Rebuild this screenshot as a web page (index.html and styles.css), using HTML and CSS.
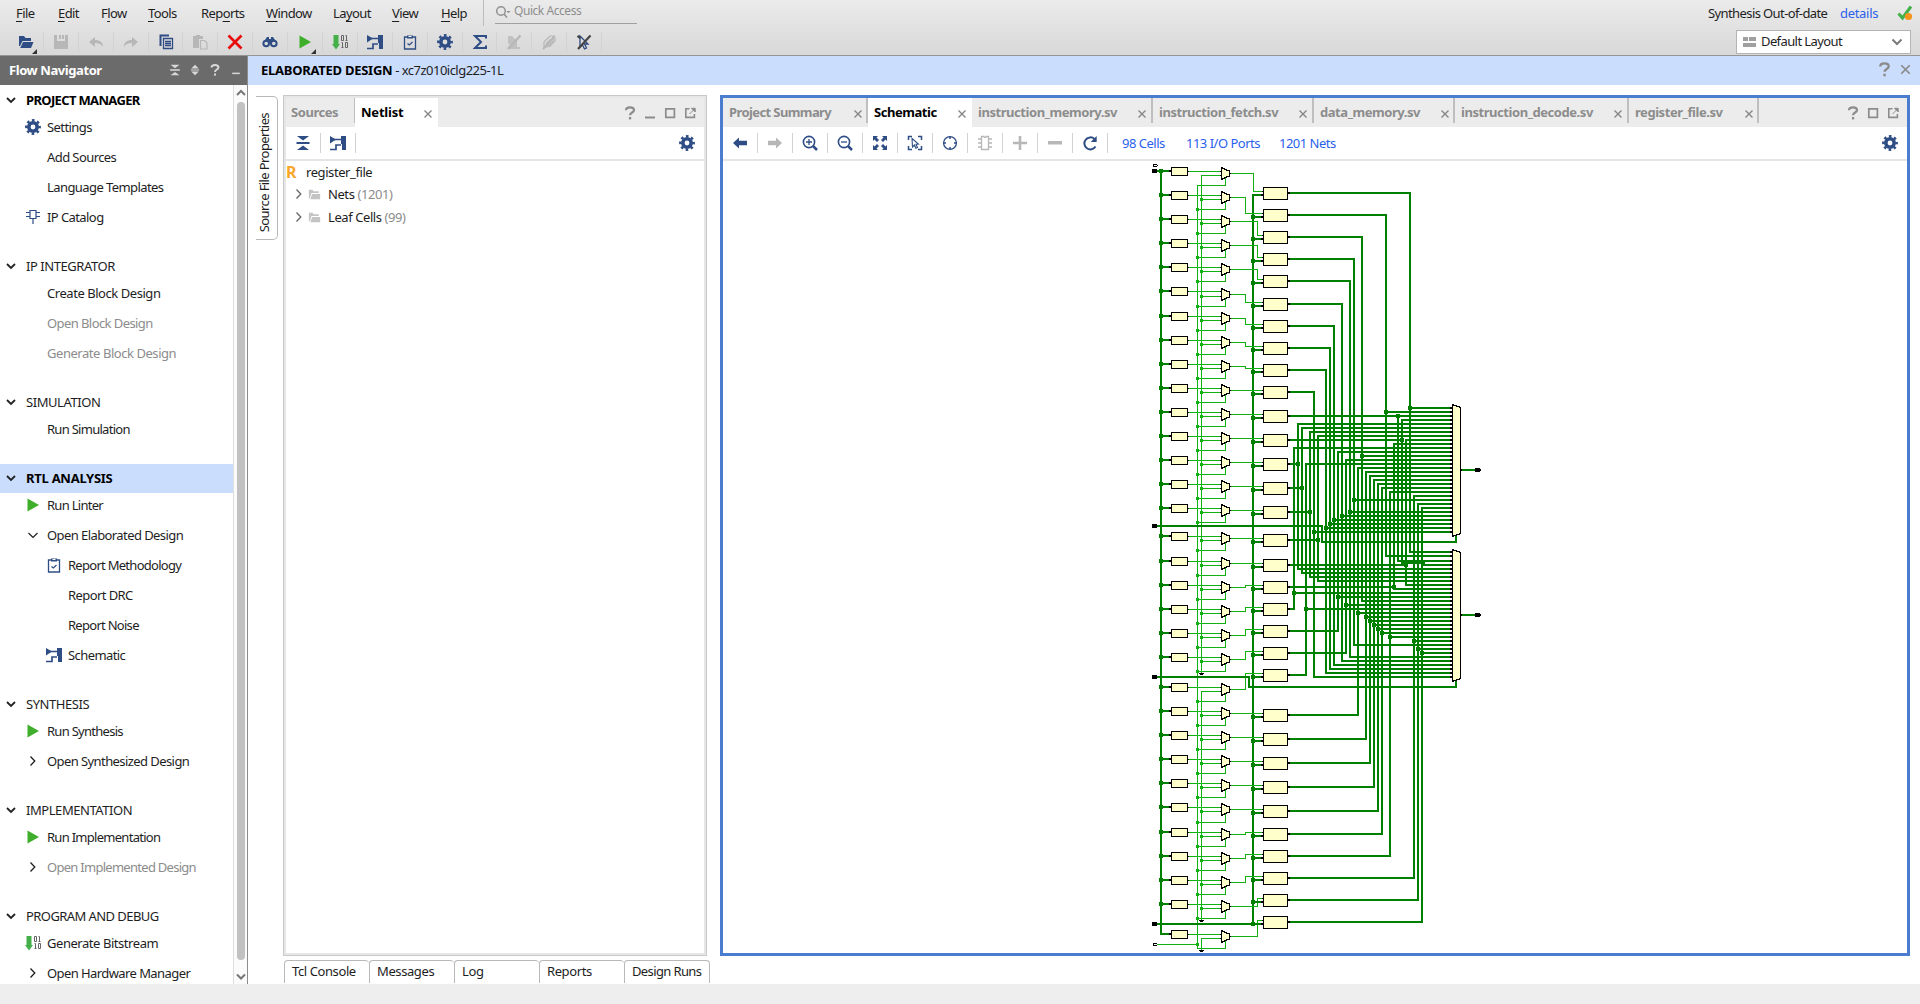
FILE: index.html
```html
<!DOCTYPE html>
<html lang="en">
<head>
<meta charset="utf-8">
<title>Elaborated Design</title>
<link rel="stylesheet" href="styles.css">
</head>
<body>
<svg class="defs" aria-hidden="true">
  <symbol id="gear" viewBox="0 0 16 16"><circle cx="8" cy="8" r="4.2" fill="none" stroke="currentColor" stroke-width="3.6"/><circle cx="8" cy="8" r="6.7" fill="none" stroke="currentColor" stroke-width="2.4" stroke-dasharray="2.631 2.631" stroke-dashoffset="1.315"/></symbol>
  <symbol id="open" viewBox="0 0 16 16"><path d="M1 12V2h5l1.500 2H13v3H4.500L2 12z" fill="currentColor"/><path d="M5 8h10.500l-2.500 6H2.200z" fill="currentColor"/></symbol>
  <symbol id="save" viewBox="0 0 16 16"><path d="M1 1h3v6h8V1h3v14H1zM6 1h2v4H6zM9 1h2v4H9z" fill="currentColor"/></symbol>
  <symbol id="undo" viewBox="0 0 16 16"><path d="M1 8l6-5v3c5 0 8 2 8 7-2-3-4-4-8-4v4z" fill="currentColor"/></symbol>
  <symbol id="redo" viewBox="0 0 16 16"><path d="M15 8L9 3v3c-5 0-8 2-8 7 2-3 4-4 8-4v4z" fill="currentColor"/></symbol>
  <symbol id="copy" viewBox="0 0 16 16"><path d="M2.500 12V1.500H11" fill="none" stroke="currentColor" stroke-width="2"/><path d="M5.500 4.500h9v10h-9zM7 7.500h6M7 9.500h6M7 11.500h6" fill="none" stroke="currentColor" stroke-width="1.300"/></symbol>
  <symbol id="paste" viewBox="0 0 16 16"><path d="M1 2h3V1h4v1h3v3H7v9H1z" fill="currentColor"/><path d="M8.500 6.500h4l2.500 2.500v6H8.500z" fill="none" stroke="currentColor" stroke-width="1.200"/></symbol>
  <symbol id="cross" viewBox="0 0 16 16"><path d="M1.500 1.500l13 13M14.500 1.500l-13 13" stroke="currentColor" stroke-width="2.700"/></symbol>
  <symbol id="find" viewBox="0 0 16 16"><path d="M3 6l2-3h2v2h2V3h2l2 3z" fill="currentColor"/><circle cx="4.200" cy="9.500" r="2.800" fill="none" stroke="currentColor" stroke-width="2"/><circle cx="11.800" cy="9.500" r="2.800" fill="none" stroke="currentColor" stroke-width="2"/><path d="M6 6h4v3H6z" fill="currentColor"/></symbol>
  <symbol id="play" viewBox="0 0 16 16"><path d="M2.500 1.500L14 8 2.500 14.500z" fill="#3fae2a"/></symbol>
  <symbol id="bits" viewBox="0 0 16 16"><path d="M1.500 1h5v9H8l-4 5.500L0 10h1.500z" fill="#45b04a"/><path d="M9.500 1.500h2v5h-2zM13.500 6.500h2M14.500 6.500v-5h-1M9.500 13.500h2M10.500 13.500v-5h-1M13.500 8.500h2v5h-2z" fill="none" stroke="#666"/></symbol>
  <symbol id="schem" viewBox="0 0 16 16"><path d="M0 1l6 3.500L0 8.500z" fill="currentColor"/><path d="M4 4.500h8M0 14.500h6v-4.500h5" fill="none" stroke="currentColor" stroke-width="1.700"/><path d="M11 1h5v14h-4V9h-1z" fill="currentColor"/></symbol>
  <symbol id="clip" viewBox="0 0 16 16"><path d="M2.500 3h11v12h-11z" fill="none" stroke="currentColor" stroke-width="1.300"/><path d="M5 4.500v-3h6v3z" fill="currentColor"/><path d="M6.500 2h3v1h-3z" fill="#fff"/><path d="M5.500 9.500l1.800 1.500 3.200-3" fill="none" stroke="currentColor" stroke-width="1.200"/></symbol>
  <symbol id="sum" viewBox="0 0 16 16"><path d="M14 4.500V2H3l6 6-6 6h11v-2.500" fill="none" stroke="currentColor" stroke-width="2"/></symbol>
  <symbol id="off1" viewBox="0 0 16 16"><path d="M2 2h4l5 5v6H6L2 9zM3 13h11v2H3z" fill="currentColor" opacity=".75"/><path d="M2 15L14.500 1.500" stroke="currentColor" stroke-width="2.400"/></symbol>
  <symbol id="off2" viewBox="0 0 16 16"><path d="M3 12V8l6-6h3v5l-6 6zM5 10l5-5M8 13l6-6V4" fill="none" stroke="currentColor" stroke-width="1.200"/><path d="M2 15L14 2" stroke="currentColor" stroke-width="2"/></symbol>
  <symbol id="nosel" viewBox="0 0 16 16"><path d="M4 2l8 8H8.500l2 4-2 1-2-4L4 13z" fill="none" stroke="#2c4a80" stroke-width="1.300"/><path d="M2 15L14.500 1.500M1.500 2l3 2" stroke="#444" stroke-width="2.200"/></symbol>
  <symbol id="collapse" viewBox="0 0 16 16"><path d="M2 1h12L8 5.500zM2 15h12l-6-4.500zM1.500 7h13v2h-13z" fill="currentColor"/></symbol>
  <symbol id="expand" viewBox="0 0 16 16"><path d="M3 6h10L8 1zM3 10h10l-5 5zM2.500 7.200h11v1.600h-11z" fill="currentColor"/></symbol>
  <symbol id="help" viewBox="0 0 16 16"><path d="M4 5.200C4 3 5.500 2.300 8 2.300s4 .9 4 2.900c0 2.300-4 2.300-4 5" fill="none" stroke="currentColor" stroke-width="2.200"/><path d="M6.900 12h2.300v2.400H6.900z" fill="currentColor"/></symbol>
  <symbol id="min" viewBox="0 0 16 16"><path d="M3 11.500h10v2H3z" fill="currentColor"/></symbol>
  <symbol id="max" viewBox="0 0 16 16"><path d="M3.800 3.800h8.600v8.600H3.800z" fill="none" stroke="currentColor" stroke-width="1.700"/></symbol>
  <symbol id="pop" viewBox="0 0 16 16"><path d="M7.500 3.800H3.800v8.600h8.600V9" fill="none" stroke="currentColor" stroke-width="1.600"/><path d="M7.500 9l4-4M9.500 3.300h3.700V7z" fill="currentColor" stroke="currentColor" stroke-width="1"/></symbol>
  <symbol id="x" viewBox="0 0 16 16"><path d="M4 4l8 8M12 4l-8 8" stroke="currentColor" stroke-width="1.600"/></symbol>
  <symbol id="down" viewBox="0 0 16 16"><path d="M4 6l4 4 4-4" fill="none" stroke="currentColor" stroke-width="1.800"/></symbol>
  <symbol id="thindown" viewBox="0 0 16 16"><path d="M3.500 6L8 10.500 12.500 6" fill="none" stroke="currentColor" stroke-width="1.200"/></symbol>
  <symbol id="right" viewBox="0 0 16 16"><path d="M5.500 3.500L9.800 8 5.500 12.500" fill="none" stroke="currentColor" stroke-width="1.300"/></symbol>
  <symbol id="ip" viewBox="0 0 16 16"><path d="M5 1.500h6v8H5zM1 3.500h4M1 7.500h4M11 3.500h4M11 7.500h4M8 9.500V15" fill="none" stroke="currentColor" stroke-width="1.200"/></symbol>
  <symbol id="folder" viewBox="0 0 16 16"><path d="M2 12V3h4l1 1.500h5.500v2H4.800L3 12z" fill="currentColor"/><path d="M5.500 7.500H14V13H3.500z" fill="currentColor"/></symbol>
  <symbol id="back" viewBox="0 0 16 16"><path d="M1 8l6-5.500v3.200h8v4.600H7v3.200z" fill="currentColor"/></symbol>
  <symbol id="fwd" viewBox="0 0 16 16"><path d="M15 8L9 2.500v3.200H1v4.600h8v3.200z" fill="currentColor"/></symbol>
  <symbol id="zin" viewBox="0 0 16 16"><circle cx="7" cy="7" r="5.600" fill="none" stroke="currentColor" stroke-width="1.600"/><path d="M4 7h6M7 4v6" stroke="currentColor" stroke-width="1.300"/><path d="M11 11l4 4" stroke="currentColor" stroke-width="2.500"/></symbol>
  <symbol id="zout" viewBox="0 0 16 16"><circle cx="7" cy="7" r="5.600" fill="none" stroke="currentColor" stroke-width="1.600"/><path d="M4 7h6" stroke="currentColor" stroke-width="1.300"/><path d="M11 11l4 4" stroke="currentColor" stroke-width="2.500"/></symbol>
  <symbol id="fit" viewBox="0 0 16 16"><path d="M1 1h5L4.500 2.500 7 5 5 7 2.500 4.500 1 6zM15 1v5l-1.500-1.500L11 7 9 5l2.500-2.500L10 1zM1 15v-5l1.500 1.500L5 9l2 2-2.500 2.500L6 15zM15 15h-5l1.500-1.500L9 11l2-2 2.500 2.500L15 10z" fill="currentColor"/></symbol>
  <symbol id="fitsel" viewBox="0 0 16 16"><path d="M1.500 5V1.500H5M11 1.500h3.500V5M14.500 11v3.500H11M5 14.500H1.500V11" fill="none" stroke="currentColor" stroke-width="1.500"/><path d="M5 3.500l6.500 5.500-2.500.3 1.500 3.200-1.600.8-1.400-3.300L5.500 12z" fill="none" stroke="currentColor" stroke-width="1.100"/></symbol>
  <symbol id="target" viewBox="0 0 16 16"><circle cx="8" cy="8" r="6.400" fill="none" stroke="currentColor" stroke-width="1.300"/><path d="M8 1v3M8 12v3M1 8h3M12 8h3" stroke="currentColor" stroke-width="1.500"/></symbol>
  <symbol id="chip" viewBox="0 0 16 16"><path d="M4.500 1.500H7c0 1.500 2 1.500 2 0h2.500v13h-7zM1 4h3.500M1 8h3.500M1 12h3.500M11.500 4H15M11.500 8H15M11.500 12H15" fill="none" stroke="currentColor" stroke-width="1.300"/></symbol>
  <symbol id="plus" viewBox="0 0 16 16"><path d="M1 6.700h5.700V1h2.600v5.700H15v2.600H9.300V15H6.700V9.300H1z" fill="currentColor"/></symbol>
  <symbol id="minus" viewBox="0 0 16 16"><path d="M1 6h14v3.500H1z" fill="currentColor"/></symbol>
  <symbol id="reload" viewBox="0 0 16 16"><path d="M13.500 11.500A6 6 0 1 1 12.500 4" fill="none" stroke="currentColor" stroke-width="2"/><path d="M14.700 1v6h-6z" fill="currentColor"/></symbol>
</svg>

<header class="top">
  <div class="menurow">
    <nav class="menus">
      <span class="m-file"><u>F</u>ile</span><span class="m-edit"><u>E</u>dit</span><span class="m-flow">F<u>l</u>ow</span><span class="m-tools"><u>T</u>ools</span><span class="m-reports">Rep<u>o</u>rts</span><span class="m-window"><u>W</u>indow</span><span class="m-layout">La<u>y</u>out</span><span class="m-view"><u>V</u>iew</span><span class="m-help"><u>H</u>elp</span>
    </nav>
    <div class="quick"><svg class="qicon" viewBox="0 0 16 16"><circle cx="5.500" cy="7" r="4.300"/><path d="M8.500 10l3 3.500"/><path d="M11 7h4l-2 2.200z" class="solid"/></svg><span>Quick Access</span></div>
    <div class="status"><span class="st-text">Synthesis Out-of-date</span><a>details</a><svg class="okicon" viewBox="0 0 16 16"><path d="M1.500 8.500l4 4.500L14 1.500" fill="none" stroke="#45b04a" stroke-width="3"/><circle cx="11.500" cy="11.500" r="3.600" fill="#f7941d"/></svg></div>
  </div>
  <div class="toolrow">
    <div class="tools">
      <i class="tb navy drop"><svg><use href="#open"/></svg></i><i class="tb off"><svg><use href="#save"/></svg></i><i class="tb off"><svg><use href="#undo"/></svg></i><i class="tb off"><svg><use href="#redo"/></svg></i><i class="tb navy"><svg><use href="#copy"/></svg></i><i class="tb off"><svg><use href="#paste"/></svg></i><i class="tb red"><svg><use href="#cross"/></svg></i><i class="tb navy"><svg><use href="#find"/></svg></i><i class="tb drop"><svg><use href="#play"/></svg></i><i class="tb"><svg><use href="#bits"/></svg></i><i class="tb navy"><svg><use href="#schem"/></svg></i><i class="tb navy"><svg><use href="#clip"/></svg></i><i class="tb navy"><svg><use href="#gear"/></svg></i><i class="tb navy"><svg><use href="#sum"/></svg></i><i class="tb off"><svg><use href="#off1"/></svg></i><i class="tb off"><svg><use href="#off2"/></svg></i><i class="tb"><svg><use href="#nosel"/></svg></i>
    </div>
    <div class="layoutsel"><svg class="lay" viewBox="0 0 13 12"><path d="M0 1h5v4H0zM6 1h7v4H6zM0 7h13v4H0z"/></svg><span>Default Layout</span><svg class="chev" viewBox="0 0 16 16"><path d="M3.500 5.500L8 10l4.500-4.500"/></svg></div>
  </div>
</header>

<main class="main">
  <aside class="side">
    <div class="sidehead"><b>Flow Navigator</b><svg><use href="#collapse"/></svg><svg><use href="#expand"/></svg><svg class="big"><use href="#help"/></svg><svg><use href="#min"/></svg></div>
    <div class="sidebody">
      <div class="flow">
        <section><h3 class="b tight"><svg><use href="#down"/></svg>PROJECT MANAGER</h3>
          <ul><li class="navy"><svg><use href="#gear"/></svg>Settings</li><li><svg></svg>Add Sources</li><li><svg></svg>Language Templates</li><li class="navy"><svg><use href="#ip"/></svg>IP Catalog</li></ul></section>
        <section><h3><svg><use href="#down"/></svg>IP INTEGRATOR</h3>
          <ul><li class="loose"><svg></svg>Create Block Design</li><li class="dis"><svg></svg>Open Block Design</li><li class="dis loose"><svg></svg>Generate Block Design</li></ul></section>
        <section><h3><svg><use href="#down"/></svg>SIMULATION</h3>
          <ul><li class="tight"><svg></svg>Run Simulation</li></ul></section>
        <section><h3 class="b sel"><svg><use href="#down"/></svg>RTL ANALYSIS</h3>
          <ul><li class="tight"><svg><use href="#play"/></svg>Run Linter</li><li><svg><use href="#thindown"/></svg>Open Elaborated Design</li><li class="sub navy tight"><svg><use href="#clip"/></svg>Report Methodology</li><li class="sub"><svg></svg>Report DRC</li><li class="sub tight"><svg></svg>Report Noise</li><li class="sub navy"><svg><use href="#schem"/></svg>Schematic</li></ul></section>
        <section><h3><svg><use href="#down"/></svg>SYNTHESIS</h3>
          <ul><li class="tight"><svg><use href="#play"/></svg>Run Synthesis</li><li><svg><use href="#right"/></svg>Open Synthesized Design</li></ul></section>
        <section><h3><svg><use href="#down"/></svg>IMPLEMENTATION</h3>
          <ul><li class="tight"><svg><use href="#play"/></svg>Run Implementation</li><li class="dis tight"><svg><use href="#right"/></svg>Open Implemented Design</li></ul></section>
        <section><h3 class="mid"><svg><use href="#down"/></svg>PROGRAM AND DEBUG</h3>
          <ul><li class="loose"><svg><use href="#bits"/></svg>Generate Bitstream</li><li><svg><use href="#right"/></svg>Open Hardware Manager</li></ul></section>
      </div>
      <div class="scroll"><svg viewBox="0 0 14 14"><path d="M3 9.500l4-4 4 4"/></svg><div class="thumb"></div><svg viewBox="0 0 14 14"><path d="M3 5l4 4 4-4"/></svg></div>
    </div>
  </aside>

  <div class="work">
    <div class="title"><span><b>ELABORATED DESIGN</b> - xc7z010iclg225-1L</span><svg><use href="#help"/></svg><svg><use href="#x"/></svg></div>
    <div class="panes">
      <div class="vtab"><span>Source File Properties</span></div>
      <div class="leftcol">
        <div class="panel netlist">
          <div class="tabs"><span class="tab t-src">Sources</span><span class="tab on t-net">Netlist<svg><use href="#x"/></svg></span><span class="ctl"><svg><use href="#help"/></svg><svg><use href="#min"/></svg><svg><use href="#max"/></svg><svg><use href="#pop"/></svg></span></div>
          <div class="bar"><i class="pb"><svg><use href="#collapse"/></svg></i><i class="pb"><svg><use href="#schem"/></svg></i><svg class="gearend"><use href="#gear"/></svg></div>
          <div class="tree">
            <div class="root"><b>R</b>register_file</div>
            <div class="node"><svg class="arr"><use href="#right"/></svg><svg class="fold"><use href="#folder"/></svg>Nets&nbsp;<em>(1201)</em></div>
            <div class="node"><svg class="arr"><use href="#right"/></svg><svg class="fold"><use href="#folder"/></svg>Leaf Cells&nbsp;<em>(99)</em></div>
          </div>
        </div>
        <div class="btabs"><span>Tcl Console</span><span>Messages</span><span>Log</span><span>Reports</span><span>Design Runs</span></div>
      </div>
      <div class="panel sch">
        <div class="tabs"><span class="tab w1">Project Summary<svg><use href="#x"/></svg></span><span class="tab on w2">Schematic<svg><use href="#x"/></svg></span><span class="tab w3">instruction_memory.sv<svg><use href="#x"/></svg></span><span class="tab w4">instruction_fetch.sv<svg><use href="#x"/></svg></span><span class="tab w5">data_memory.sv<svg><use href="#x"/></svg></span><span class="tab w6">instruction_decode.sv<svg><use href="#x"/></svg></span><span class="tab w7">register_file.sv<svg><use href="#x"/></svg></span><span class="ctl"><svg><use href="#help"/></svg><svg><use href="#max"/></svg><svg><use href="#pop"/></svg></span></div>
        <div class="bar"><i class="pb"><svg><use href="#back"/></svg></i><i class="pb off"><svg><use href="#fwd"/></svg></i><i class="pb"><svg><use href="#zin"/></svg></i><i class="pb"><svg><use href="#zout"/></svg></i><i class="pb"><svg><use href="#fit"/></svg></i><i class="pb"><svg><use href="#fitsel"/></svg></i><i class="pb"><svg><use href="#target"/></svg></i><i class="pb off"><svg><use href="#chip"/></svg></i><i class="pb off"><svg><use href="#plus"/></svg></i><i class="pb off"><svg><use href="#minus"/></svg></i><i class="pb"><svg><use href="#reload"/></svg></i><a class="l1">98 Cells</a><a class="l2">113 I/O Ports</a><a>1201 Nets</a><svg class="gearend"><use href="#gear"/></svg></div>
        <svg id="canvas" viewBox="723 161 1184 792" shape-rendering="crispEdges"></svg>
      </div>
    </div>
  </div>
</main>
<footer class="foot"></footer>
<script src="schematic.js"></script>
</body>
</html>
```

FILE: styles.css
```css
* { box-sizing: border-box; }
body { margin: 0; width: 1920px; height: 1004px; overflow: hidden; display: flex; flex-direction: column; background: #fff; color: #1e1e1e; font: 13px/16px "Noto Sans", sans-serif; letter-spacing: -0.6px; }
svg { width: 16px; height: 16px; flex: none; display: block; }
.defs { width: 0; height: 0; position: absolute; }
i { font-style: normal; }
h3, ul { margin: 0; padding: 0; list-style: none; font-size: 13px; font-weight: 400; }
u { text-underline-offset: 3px; }
.navy svg { color: #2f4d85; }
.off svg { color: #b7b7b7; }
.red svg { color: #e80c0c; }

.top { height: 56px; flex: none; border-bottom: 1px solid #959595; background: linear-gradient(#ebebeb, #d8d8d8); }
.menurow { height: 27px; display: flex; align-items: center; }
.menus { display: flex; width: 484px; height: 26px; align-items: center; padding-left: 16px; border-right: 1px solid #bdbdbd; align-self: flex-start; }
.menus span { flex: none; }
.m-file { width: 42px; } .m-edit { width: 43px; } .m-flow { width: 47px; } .m-tools { width: 53px; } .m-reports { width: 65px; } .m-window { width: 67px; } .m-layout { width: 59px; } .m-view { width: 49px; }
.quick { width: 142px; height: 24px; margin-left: 11px; display: flex; align-items: center; align-self: flex-start; border-bottom: 1px solid #a0a0a0; color: #8e8e8e; font-size: 12px; letter-spacing: -.45px; }
.quick span { padding-bottom: 1px; }
.qicon { width: 17px; margin-right: 2px; fill: none; stroke: #909090; stroke-width: 1.5; }
.qicon .solid { fill: #909090; stroke: none; }
.status { margin-left: auto; display: flex; align-items: center; height: 25px; align-self: flex-start; padding-right: 7px; }
.st-text { width: 132px; }
.status a { width: 57px; letter-spacing: -.3px; }
a { color: #2b5fec; }
.toolrow { height: 28px; display: flex; align-items: center; justify-content: space-between; padding: 2px 9px 0; }
.tools { display: flex; }
.tb { width: 34.9px; height: 20px; display: flex; align-items: center; justify-content: center; border-right: 1px solid #d2d2d2; position: relative; }
.drop::after { content: ""; position: absolute; right: 6px; bottom: -2px; border-left: 5px solid transparent; border-bottom: 5px solid #333; }
.layoutsel { width: 175px; height: 24px; margin-top: -1px; background: #fff; border: 1px solid #b4b4b4; display: flex; align-items: center; padding: 0 5px 0 6px; }
.lay { width: 13px; height: 12px; margin-right: 5px; fill: #a0a0a0; }
.layoutsel span { padding-bottom: 1px; }
.chev { margin-left: auto; fill: none; stroke: #7a7a7a; stroke-width: 2; }

.main { height: 928px; flex: none; display: flex; }
.side { width: 248px; display: flex; flex-direction: column; border-right: 1px solid #8c8c8c; }
.sidehead { height: 29px; flex: none; background: #6b6b6b; color: #fff; display: flex; align-items: center; padding: 0 5px 2px 9px; }
.sidehead b { margin-right: auto; letter-spacing: -.42px; }
.sidehead svg { width: 12px; height: 12px; margin-left: 8px; color: #d8d8d8; }
.sidehead .big { width: 14px; height: 14px; margin: 0 0 0 7px; }
.sidebody { display: flex; flex: 1; min-height: 0; overflow: hidden; }
.flow { width: 233px; padding-top: 1px; overflow: hidden; }
.flow h3 { height: 29px; display: flex; align-items: center; padding: 0 0 2px 3px; letter-spacing: -.44px; }
.flow h3 svg { margin-right: 7px; color: #222; }
.flow h3.b { font-weight: 700; color: #000; }
.flow h3.sel { background: #cbddfd; letter-spacing: -.26px; }
.flow h3.tight { letter-spacing: -.65px; }
.flow h3.mid { letter-spacing: -.57px; }
.flow ul { margin: -3px 0 20px; }
.flow li { height: 30px; display: flex; align-items: center; padding-left: 25px; white-space: nowrap; letter-spacing: -.58px; }
.flow li.tight { letter-spacing: -.72px; }
.flow li.loose { letter-spacing: -.45px; }
.flow li svg { margin-right: 6px; }
.flow .sub { padding-left: 46px; }
.dis { color: #8c8c8c; }
.dis svg { color: #222; }
.scroll { width: 14px; border-left: 1px solid #dedede; background: #fbfbfb; display: flex; flex-direction: column; align-items: center; padding: 0; }
.scroll svg { width: 14px; height: 15px; fill: none; stroke: #777; stroke-width: 2; }
.thumb { width: 8px; height: 858px; margin: 2px 0 9px; border-radius: 4px; background: #c1c1c1; }

.work { flex: 1; display: flex; flex-direction: column; }
.title { height: 29px; background: #cbddfd; display: flex; align-items: center; padding: 0 6px 2px 13px; color: #1e1e1e; letter-spacing: -.52px; }
.title b { color: #000; letter-spacing: -.26px; }
.title span { margin-right: auto; }
.title svg { color: #8a8a8a; margin-left: 4px; width: 17px; height: 17px; }
.panes { flex: 1; display: flex; align-items: flex-start; padding: 10px 0 0 8px; }
.vtab { width: 22px; height: 144px; margin: 1px 5px 0 0; border: 1px solid #b8b8b8; border-left: 0; border-radius: 0 5px 5px 0; display: flex; align-items: center; justify-content: center; }
.vtab span { writing-mode: vertical-rl; transform: rotate(180deg); padding: 0 0 10px 3px; margin-right: 2px; }
.leftcol { width: 427px; margin-right: 10px; }
.panel { display: flex; flex-direction: column; }
.netlist { width: 424px; height: 861px; border: 1px solid #c9c9c9; padding: 2px; box-shadow: inset 0 0 0 2px #e6e6e6; }
.sch { width: 1190px; height: 861px; border: 3px solid #4a7dcf; }
.tabs { height: 29px; flex: none; display: flex; background: #ececec; color: #8c8c8c; font-weight: 700; letter-spacing: -.45px; }
.tab { height: 25px; flex: none; display: flex; align-items: center; justify-content: space-between; border-right: 2px solid #bfbfbf; padding: 2px 0 0 6px; white-space: nowrap; }
.tab svg { width: 14px; height: 14px; margin: 4px 1px 0 0; color: #868686; }
.tab.on { background: #fff; color: #000; height: 29px; padding-bottom: 4px; border: 0; }
.t-src { width: 69px; border-right-width: 1px; padding-left: 5px; } .t-net { width: 83px; letter-spacing: -.2px; }
.tab.t-net svg { margin-right: 3px; }
.w1 { width: 145px; letter-spacing: -.6px; } .w2 { width: 104px; } .w3 { width: 181px; } .w4 { width: 161px; } .w5 { width: 141px; } .w6 { width: 174px; } .w7 { width: 130px; }
.tab.w2 svg { margin-right: 3px; }
.tab.w3 svg, .tab.w4 svg, .tab.w6 svg { margin-right: 2px; }
.ctl { margin-left: auto; display: flex; align-items: center; gap: 4px; padding: 1px 6px 0 0; }
.sch .ctl { padding-right: 6px; }
.bar { height: 34px; flex: none; border-bottom: 2px solid #e5e5e5; display: flex; align-items: center; color: #2f4d85; letter-spacing: -.5px; }
.pb { width: 35px; height: 20px; display: flex; align-items: center; justify-content: center; border-right: 1px solid #d2d2d2; }
.l1 { margin-left: 14px; width: 64px; } .l2 { width: 93px; }
.gearend { margin: 0 9px 0 auto; }
.tree { display: flex; flex-direction: column; letter-spacing: -.42px; }
.root { height: 22px; display: flex; align-items: center; padding-bottom: 1px; }
.root b { color: #f9a72b; font-size: 16px; width: 20px; }
.node { height: 23px; display: flex; align-items: center; padding: 0 0 1px 5px; }
.arr { color: #666; }
.fold { color: #c4c4c4; width: 15px; height: 15px; margin: 0 6px 0 0; }
em { font-style: normal; color: #8c8c8c; }
.btabs { display: flex; margin: 4px 0 0 1px; letter-spacing: -.4px; }
.btabs span { width: 85px; height: 23px; padding: 2px 0 0 7px; border: 1px solid #b8b8b8; border-bottom: 0; border-right: 0; border-radius: 4px 4px 0 0; }
.btabs span:last-child { width: 86px; border-right: 1px solid #b8b8b8; letter-spacing: -.62px; }
#canvas { width: 1184px; height: 792px; }
.foot { height: 20px; background: #eee; }
```

FILE: schematic.js
```js
const parts = [];
const BUS = '#008000', NET = '#12b112', PIN = '#000', CELL = '#ffffcc';
const box = (x, y, w, h, c) => parts.push(`<rect x="${x}" y="${y}" width="${w}" height="${h}" fill="${c}"/>`);
// Axis-aligned segments; t is the stroke thickness, coordinates are stroke centres.
const hl = (x1, x2, y, t, c) => box(Math.min(x1, x2) - t / 2, y - t / 2, Math.abs(x2 - x1) + t, t, c);
const vl = (x, y1, y2, t, c) => box(x - t / 2, Math.min(y1, y2) - t / 2, t, Math.abs(y2 - y1) + t, c);
const dot = (x, y) => box(x - 2, y - 2, 4, 4, BUS);
const sdot = (x, y) => box(x - 1.5, y - 1.5, 3, 3, NET);
const cell = (x, y, w, h) => { box(x, y, w, h, PIN); box(x + 1, y + 1, w - 2, h - 2, CELL); };

const cmp = [171.5, 195.5, 219.5, 243.5, 267.5, 291.5, 316.5, 340.5, 364.5, 388.5, 412.5, 436.5, 460.5, 484.5, 508.5, 536.5,
  561.5, 585.5, 609.5, 633.5, 657.5, 687.5, 711.5, 735.5, 759.5, 783.5, 807.5, 832.5, 856.5, 880.5, 904.5, 934.5];
const reg = [193.5, 215.5, 237.5, 259.5, 281.5, 304.5, 326.5, 348.5, 370.5, 392.5, 416.5, 440.5, 464.5, 488.5, 512.5, 540.5,
  565.5, 587.5, 609.5, 631.5, 653.5, 675.5, 715.5, 739.5, 763.5, 787.5, 811.5, 834.5, 856.5, 878.5, 900.5, 922.5];
const jog = [1253.5, 1245.5, 1257.5, 1257.5, 1257.5, 1245.5, 1245.5, 1245.5, 1245.5];
// Column of each register's output bus.
const col = [1410, 1386, 1362, 1354, 1350, 1342, 1334, 1330, 1326, 1314, 1398, 1402, 1298, 1302, 1310, 1318,
  1406, 1394, 1294, 1338, 1346, 1306, 1358, 1366, 1370, 1374, 1378, 1382, 1390, 1414, 1418, 1422];
// Register order on the inputs of the two read multiplexers, top to bottom.
const order = [1, 2, 11, 12, 13, 14, 15, 16, 17, 18, 19, 20, 3, 21, 22, 23, 24, 25, 26, 27, 28, 29, 30, 4, 31, 32, 5, 6, 7, 8, 9, 10];
const upperY = k => 408 + 4 * k;
const lowerY = k => 552 + 4 * k + (k > 1 ? 1 : 0);

// Shared rails
vl(1161, 171, 934, 2, BUS);
vl(1253, 195, 924, 2, BUS);
vl(1197.5, 185.5, 948.5, 1, NET);
vl(1201.5, 175.5, 672.5, 1, NET);
vl(1201.5, 691.5, 919.5, 1, NET);
vl(1201.5, 938.5, 949.5, 1, NET);
for (const y of [673, 920, 950]) { box(1199, y, 5, 1, PIN); box(1200, y + 1, 3, 1, PIN); }

cmp.forEach((y, i) => {
  const m = y + (i === 5 ? 3 : 2), sel = y + (i === 5 || i === 26 ? 15 : 14), r = reg[i];
  hl(1161, 1168, y - .5, 2, BUS);
  box(1169, y - 1.5, 2, 2, PIN);
  if (i < 31) dot(1161, y - .5);
  cell(1171, y - 4.5, 17, 9);
  box(1188, y - .5, 1, 1, PIN);
  hl(1189.5, 1219.5, y, 1, NET);
  hl(1201.5, 1219.5, m + 2, 1, NET);
  box(1220, y - .5, 1, 1, PIN);
  box(1220, m + 1.5, 1, 1, PIN);
  vl(1225.5, m + 5, sel, 1, NET);
  hl(1197.5, 1225.5, sel, 1, NET);
  if (i > 0 && i < 31) sdot(1197.5, sel);
  if (i > 0 && i !== 21 && i < 31) sdot(1201.5, m + 2);
  parts.push(`<path d="M1221.5 ${m - 6}h1v1h2v1h2v1h3v6h-3v1h-2v1h-2v1h-1z" fill="${CELL}" stroke="${PIN}"/>`);
  box(1230, m - .5, 1, 1, PIN);
  const d = r - 2;
  if (d === m) hl(1231.5, 1261.5, m, 1, NET);
  else {
    const x = jog[i] || (i > 29 ? 1257.5 : 1245.5);
    hl(1231.5, x, m, 1, NET); vl(x, m, d, 1, NET); hl(x, 1261.5, d, 1, NET);
  }
});

reg.forEach((c, i) => {
  hl(1253, 1260, c + 1.5, 2, BUS);
  if (i) dot(1253, c + 1.5);
  box(1261, c + .5, 2, 2, PIN);
  box(1262, c - 2.5, 1, 1, PIN);
  cell(1263, c - 6.5, 25, 13);
  box(1288, c - 1.5, 2, 2, PIN);
  const x = col[i], y = c - .5, k = order.indexOf(i + 1);
  const ty = upperY(k), by = lowerY(k);
  hl(1291, x, y, 2, BUS);
  hl(x, 1449, ty, 2, BUS);
  if (i === 11) {
    // Register 12 reaches the lower multiplexer through a short side step.
    vl(x, ty, 563, 2, BUS); hl(x, 1423, 563, 2, BUS); dot(1423, 563);
    hl(1423, 1449, by, 2, BUS);
  } else {
    vl(x, Math.min(ty, y), Math.max(by, y), 2, BUS);
    hl(x, 1449, by, 2, BUS);
  }
  // Junction sits where the bus branches to the second multiplexer.
  if (i < 10) dot(x, ty);
  else if (i < 18) dot(x, y);
  else dot(x, by);
});

// Read address ports and multiplexer selects
hl(1158, 1322, 526, 2, BUS); vl(1322, 526, 542, 2, BUS); hl(1322, 1456, 542, 2, BUS); vl(1456, 536, 542, 2, BUS);
hl(1158, 1249, 677, 2, BUS); vl(1249, 677, 687, 2, BUS); hl(1249, 1456, 687, 2, BUS); vl(1456, 681, 687, 2, BUS);
hl(1158, 1253, 924, 2, BUS); dot(1253, 924);
hl(1158, 1161, 171, 2, BUS);
hl(1157.5, 1197.5, 944.5, 1, NET); sdot(1197.5, 944.5);

for (const [t, inputY] of [[404, upperY], [549, lowerY]]) {
  parts.push(`<path d="M1452.5 ${t + .5}h1v1h3v1h3v1h1v126h-1v1h-3v1h-3v1h-1z" fill="${CELL}" stroke="${PIN}"/>`);
  for (let k = 0; k < 32; k++) box(1450, inputY(k) - 1, 2, 2, PIN);
  const y = t + 66;
  box(1461, y - 1, 2, 2, PIN); hl(1463, 1474, y, 2, BUS); box(1475, y - 2, 5, 4, PIN); box(1480, y - 1, 1, 2, PIN);
}
for (const y of [171, 526, 677, 924]) box(1152, y - 2, 5, 4, PIN);
parts.push(`<path d="M1153.500 164.500h3l1 1-1 1h-3zM1157 943.500h-3.500v2h3.500" fill="#fff" stroke="${PIN}"/>`);
document.getElementById('canvas').innerHTML = parts.join('');
```
